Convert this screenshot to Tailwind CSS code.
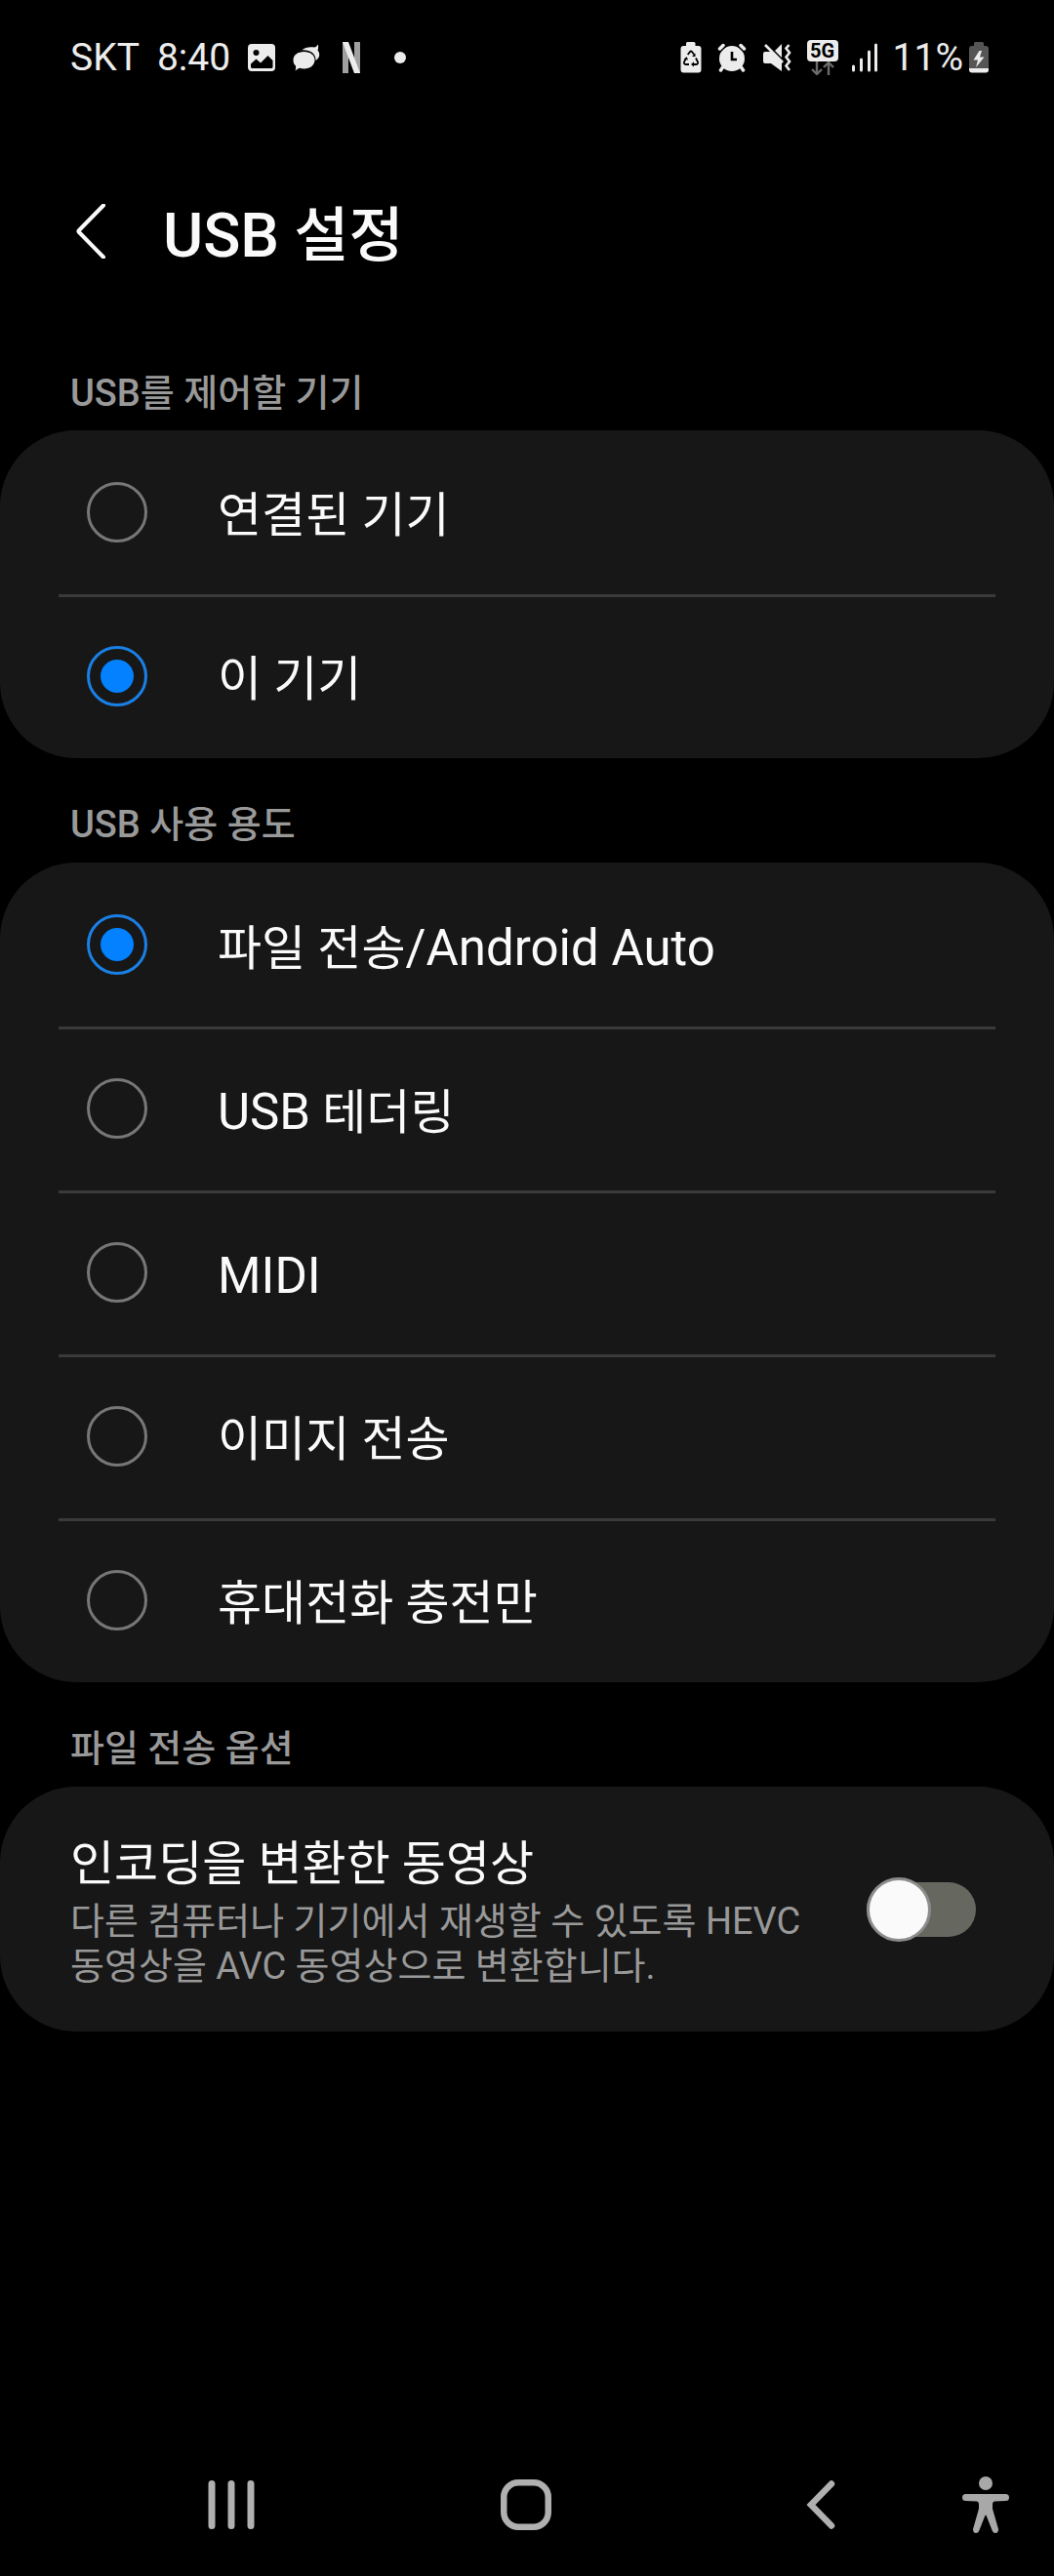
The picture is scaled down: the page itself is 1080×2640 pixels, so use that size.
<!DOCTYPE html>
<html lang="ko">
<head>
    <meta charset="UTF-8">
    <meta name="viewport" content="width=device-width, initial-scale=1.0">
    <title>USB 설정</title>
    <script src="https://cdn.jsdelivr.net/npm/@tailwindcss/browser@4"></script>
</head>
<body class="bg-black text-[#fafafa] font-[Roboto,'Noto_Sans_CJK_KR',sans-serif] flex flex-col min-h-screen">

    <!-- Status bar -->
    <div class="flex justify-between items-center h-[118px] pl-[72px] pr-[67px] text-[39px] text-[#ececec]">
        <div class="flex items-center gap-[18px]">
            <span>SKT</span>
            <span>8:40</span>
            <svg class="w-7 h-7" viewBox="0 0 28 28" aria-hidden="true">
                <rect width="28" height="28" rx="4" fill="#ececec"/>
                <circle cx="8.500" cy="9" r="3" fill="#000"/>
                <path d="M3 20.500 8.500 15.500 13 19.500 20.500 12 25.500 17V23.500Q25.500 25 24 25H4.500Q3 25 3 23.500Z" fill="#000"/>
            </svg>
            <svg class="w-7 h-7" viewBox="0 0 28 28" fill="#ececec" aria-hidden="true">
                <path d="M9 6.500C12 3.500 18 2.500 22 3.500Q24.500 3 26 0.500 26.500 3.500 25.500 6.500C28.500 10 27.500 14.500 23.500 17 24 9.500 16.500 5.500 9 6.500Z"/>
                <path d="M11.500 8C18 8 22.500 11.500 22.500 16.500S18 25.500 11.500 25.500Q9 25.500 7 24.700 5 25.500 2.500 27.500 3.500 25 3 22.500C1.200 21 .5 19 .5 16.500.5 11.500 5 8 11.500 8Z"/>
            </svg>
            <svg class="w-7 h-8" viewBox="0 0 28 32" aria-hidden="true">
                <path d="M5 0H11V32H5ZM17 0H23V32H17Z" fill="#a0a0a0"/>
                <path d="M5 0H11L23 32H17Z" fill="#ececec"/>
            </svg>
            <svg class="w-3 h-3 ml-3" viewBox="0 0 12 12" aria-hidden="true"><circle cx="6" cy="6" r="6" fill="#ececec"/></svg>
        </div>
        <div class="flex items-center">
            <svg class="w-[22px] h-8 mr-4" viewBox="0 0 22 32" aria-hidden="true">
                <path d="M6 1.500Q6 0 7.500 0H14Q15.500 0 15.500 1.500V4H18.500Q21.500 4 21.500 7V28.500Q21.500 31.500 18.500 31.500H3.500Q.5 31.500.5 28.500V7Q.5 4 3.500 4H6Z" fill="#ececec"/>
                <path d="M7.700 13 10 10Q11 9 12 10L14.300 13M16 16.500 18 20.500Q18.500 23 16.500 23H13M9 23H5.500Q3.500 23 4 20.500L6 16.500" fill="none" stroke="#000" stroke-width="1.800"/>
                <path d="M15.500 11.500V15H12ZM14 20.300V25.500L11 23ZM4 17.500 6.800 15.200 8 18.500Z" fill="#000"/>
            </svg>
            <svg class="w-[30px] h-[30px] mr-4" viewBox="0 0 30 30" aria-hidden="true">
                <circle cx="15" cy="16" r="13" fill="#ececec"/>
                <path d="M0 8 8 0M30 8 22 0" stroke="#000" stroke-width="7"/>
                <path d="M2.500 6 6 2.500M27.500 6 24 2.500M5.500 25 3.500 28M24.500 25 26.500 28" stroke="#ececec" stroke-width="3.500" stroke-linecap="round"/>
                <path d="M15 9V17H20" fill="none" stroke="#000" stroke-width="2.600"/>
            </svg>
            <svg class="w-[30px] h-[30px] mr-4" viewBox="0 0 30 30" aria-hidden="true">
                <path d="M1 11Q1 9 3 9H9L20 20V29L9 21H3Q1 21 1 19ZM13 8 20 1V15Z" fill="#ececec"/>
                <path d="M3 2 21 20" stroke="#ececec" stroke-width="2.600"/>
                <path d="M27.500 2 24.500 5.500 28 10 24.500 14.500 28 19 24.500 23.500 28 28" fill="none" stroke="#ececec" stroke-width="2.600"/>
            </svg>
            <div class="flex flex-col items-center mr-3.5">
                <span class="bg-[#ececec] text-black rounded-[4px] w-8 h-[22px] text-[20px] leading-[22px] font-bold text-center">5G</span>
                <svg class="w-6 h-3.5" viewBox="0 0 24 14" fill="none" stroke="#6b6b6b" stroke-width="2.400" aria-hidden="true">
                    <path d="M6 0V12M1 8 6 13 11 8M18 14V2M13 6 18 1 23 6"/>
                </svg>
            </div>
            <svg class="w-[26px] h-[30px] mr-4" viewBox="0 0 26 30" stroke="#ececec" stroke-width="3" stroke-linecap="round" aria-hidden="true">
                <path d="M1.500 24V28M9.500 17V28M17.500 9V28M24.500 2V28"/>
            </svg>
            <span>11%</span>
            <svg class="w-5 h-8 ml-1.5" viewBox="0 0 20 32" aria-hidden="true">
                <path d="M5 1.500Q5 0 6.500 0H13.500Q15 0 15 1.500V4H17Q20 4 20 7V27H0V7Q0 4 3 4H5Z" fill="#555"/>
                <path d="M0 27H20V28.500Q20 31.500 17 31.500H3Q0 31.500 0 28.500Z" fill="#ececec"/>
                <path d="M10.500 9 4.500 18.500H9L7 26 15.500 15.500H11L13 9Z" fill="#ececec"/>
            </svg>
        </div>
    </div>

    <header class="flex items-center h-[246px] pl-[78px] pb-2">
        <button type="button" aria-label="뒤로" class="mr-[58px]">
            <svg class="w-[31px] h-14" viewBox="0 0 31 56" fill="none" stroke="#fafafa" stroke-width="4" stroke-linecap="round" stroke-linejoin="round">
                <path d="M28 1.500 3 27Q2 28 3 29L28 54.500"/>
            </svg>
        </button>
        <h1 class="pt-2.5 text-[61px] font-medium"><span class="text-[63px]">USB</span> 설정</h1>
    </header>

    <main class="flex-1">
        <fieldset>
            <legend class="flex items-center w-full h-[77px] pt-0.5 pl-[72px] text-[38px] font-medium text-[#999]">USB를 제어할 기기</legend>
            <div class="bg-[#171717] rounded-[78px]">
                <label class="flex items-center gap-[72px] h-[168px] pl-[89px] text-[49px]">
                    <input type="radio" name="controller" class="appearance-none shrink-0 w-[62px] h-[62px] rounded-full border-3 border-[#777]">
                    <span class="pt-2">연결된 기기</span>
                </label>
                <hr class="mx-[60px] -mb-[3px] border-t-3 border-[#3a3a3a]">
                <label class="flex items-center gap-[72px] h-[168px] pl-[89px] text-[49px]">
                    <input type="radio" name="controller" checked class="appearance-none shrink-0 w-[62px] h-[62px] p-[11px] rounded-full border-3 border-[#1a80e6] bg-[#0381fe] bg-clip-content">
                    <span class="pt-2">이 기기</span>
                </label>
            </div>
        </fieldset>

        <fieldset>
            <legend class="flex items-center w-full h-[107px] pt-[30px] pl-[72px] text-[38px] font-medium text-[#999]">USB 사용 용도</legend>
            <div class="bg-[#171717] rounded-[78px]">
                <label class="flex items-center gap-[72px] h-[168px] pl-[89px] text-[49px]">
                    <input type="radio" name="usage" checked class="appearance-none shrink-0 w-[62px] h-[62px] p-[11px] rounded-full border-3 border-[#1a80e6] bg-[#0381fe] bg-clip-content">
                    <span class="pt-2">파일 전송<span class="text-[51px]">/Android Auto</span></span>
                </label>
                <hr class="mx-[60px] -mb-[3px] border-t-3 border-[#3a3a3a]">
                <label class="flex items-center gap-[72px] h-[168px] pl-[89px] text-[49px]">
                    <input type="radio" name="usage" class="appearance-none shrink-0 w-[62px] h-[62px] rounded-full border-3 border-[#777]">
                    <span class="pt-2"><span class="text-[51px]">USB</span> 테더링</span>
                </label>
                <hr class="mx-[60px] -mb-[3px] border-t-3 border-[#3a3a3a]">
                <label class="flex items-center gap-[72px] h-[168px] pl-[89px] text-[49px]">
                    <input type="radio" name="usage" class="appearance-none shrink-0 w-[62px] h-[62px] rounded-full border-3 border-[#777]">
                    <span class="pt-2 text-[51px]">MIDI</span>
                </label>
                <hr class="mx-[60px] -mb-[3px] border-t-3 border-[#3a3a3a]">
                <label class="flex items-center gap-[72px] h-[168px] pl-[89px] text-[49px]">
                    <input type="radio" name="usage" class="appearance-none shrink-0 w-[62px] h-[62px] rounded-full border-3 border-[#777]">
                    <span class="pt-2">이미지 전송</span>
                </label>
                <hr class="mx-[60px] -mb-[3px] border-t-3 border-[#3a3a3a]">
                <label class="flex items-center gap-[72px] h-[168px] pl-[89px] text-[49px]">
                    <input type="radio" name="usage" class="appearance-none shrink-0 w-[62px] h-[62px] rounded-full border-3 border-[#777]">
                    <span class="pt-2">휴대전화 충전만</span>
                </label>
            </div>
        </fieldset>

        <section>
            <h2 class="flex items-center h-[107px] pt-[30px] pl-[72px] text-[38px] font-medium text-[#999]">파일 전송 옵션</h2>
            <label class="flex items-center justify-between h-[251px] pl-[72px] pr-[80px] bg-[#171717] rounded-[78px]">
                <span class="w-[770px]">
                    <span class="block text-[49px] leading-[70px]">인코딩을 변환한 동영상</span>
                    <span class="block text-[38px] leading-[46px] text-[#999]">다른 컴퓨터나 기기에서 재생할 수 있도록 HEVC 동영상을 AVC 동영상으로 변환합니다.</span>
                </span>
                <span class="flex items-center w-[112px] h-[66px]">
                    <input type="checkbox" role="switch" class="peer sr-only">
                    <span class="flex items-center w-full h-14 rounded-full bg-[#66675f]">
                        <span class="w-[66px] h-[66px] shrink-0 rounded-full border-3 border-[#8c8c8c] bg-[#fafafa]"></span>
                    </span>
                </span>
            </label>
        </section>
    </main>

    <!-- Navigation bar -->
    <nav class="flex items-center h-[146px] pl-[86px] pr-[46px]">
        <div class="flex-1 grid grid-cols-3 justify-items-center items-center">
            <button type="button" aria-label="최근 앱">
                <svg class="w-12 h-[50px]" viewBox="0 0 48 50" stroke="#b0b0b0" stroke-width="7" stroke-linecap="round">
                    <path d="M4 3.500V46.500M24 3.500V46.500M44 3.500V46.500"/>
                </svg>
            </button>
            <button type="button" aria-label="홈">
                <svg class="w-[52px] h-[52px]" viewBox="0 0 52 52" fill="none" stroke="#b0b0b0" stroke-width="6.500">
                    <rect x="3.250" y="3.250" width="45.500" height="45.500" rx="15"/>
                </svg>
            </button>
            <button type="button" aria-label="뒤로">
                <svg class="w-[30px] h-[50px]" viewBox="0 0 30 50" fill="none" stroke="#b0b0b0" stroke-width="6.500" stroke-linecap="round">
                    <path d="M26 3.500 5 25 26 46.500"/>
                </svg>
            </button>
        </div>
        <button type="button" aria-label="접근성" class="-ml-1.5">
            <svg class="w-12 h-[58px]" viewBox="0 0 48 58" fill="#a8a8a8">
                <circle cx="24" cy="7" r="7"/>
                <path d="M3.500 18H44.500Q48 18 48 21.500T44.500 25L33 25.500Q31 26 31 28V33L37 54Q37 58 34 58 31.500 58 30.500 55L25 41Q24 38 23 41L17.500 55Q16.500 58 14 58 11 58 11 54L17 33V28Q17 26 15 25.500L3.500 25Q0 25 0 21.500T3.500 18Z"/>
            </svg>
        </button>
    </nav>

</body>
</html>
